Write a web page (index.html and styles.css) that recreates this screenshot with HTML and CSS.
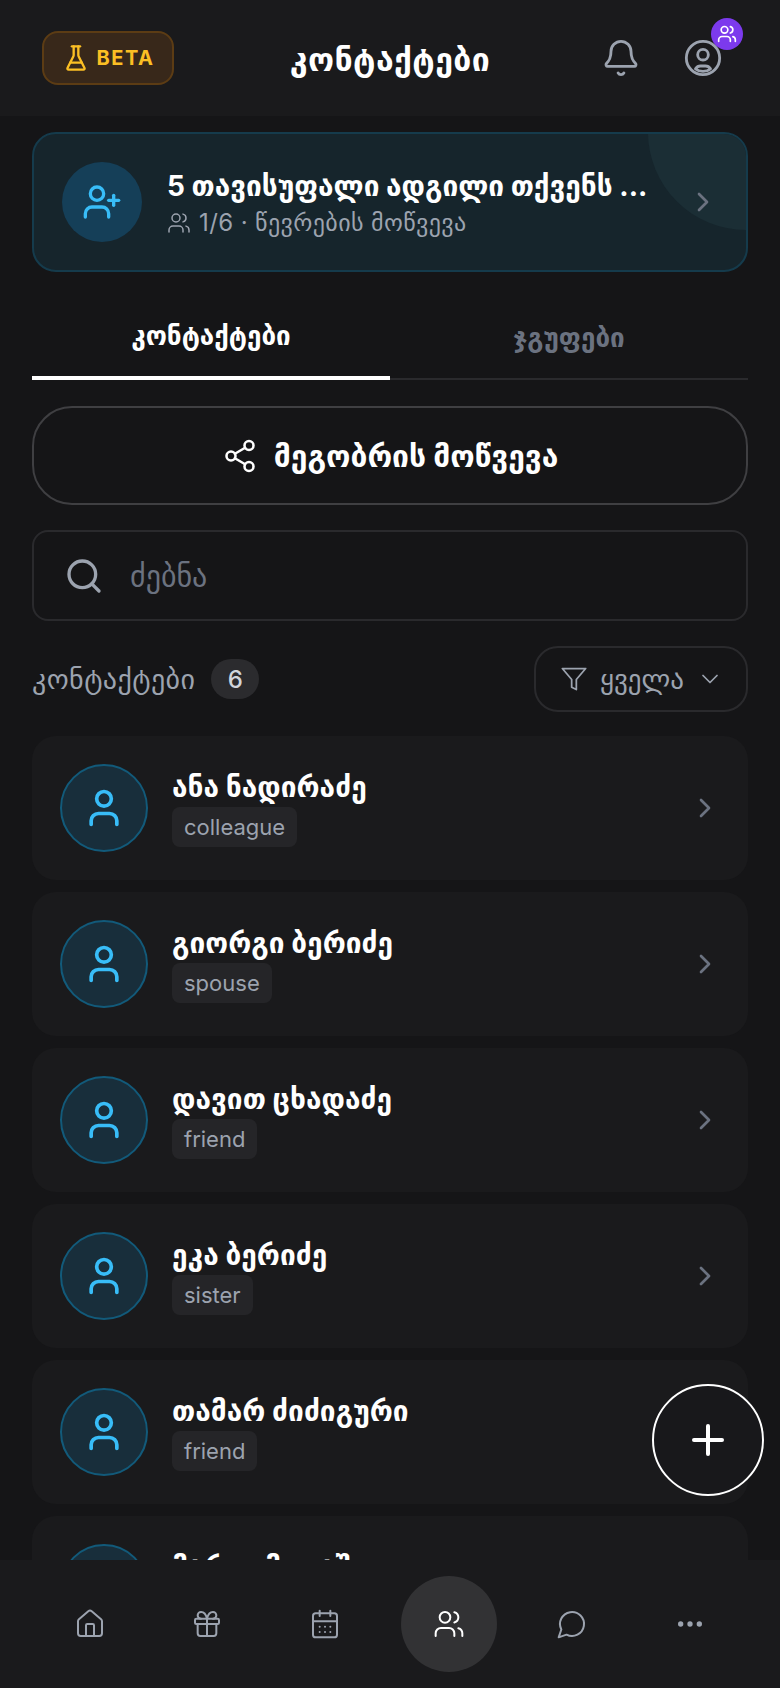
FILE: index.html
```html
<!DOCTYPE html>
<html lang="ka">
<head>
<meta charset="utf-8">
<title>კონტაქტები</title>
<link rel="stylesheet" href="styles.css">
</head>
<body>
<svg class="defs" width="0" height="0" aria-hidden="true">
  <symbol id="i-users" viewBox="0 0 24 24"><path d="M16 21v-2a4 4 0 0 0-4-4H6a4 4 0 0 0-4 4v2"/><circle cx="9" cy="7" r="4"/><path d="M22 21v-2a4 4 0 0 0-3-3.87"/><path d="M16 3.13a4 4 0 0 1 0 7.75"/></symbol>
  <symbol id="i-user" viewBox="0 0 24 24"><path d="M19 21v-2a4 4 0 0 0-4-4H9a4 4 0 0 0-4 4v2"/><circle cx="12" cy="7" r="4"/></symbol>
  <symbol id="i-chev" viewBox="0 0 24 24"><path d="m9 18 6-6-6-6"/></symbol>
</svg>
<div class="app">
  <header class="top">
    <div class="beta">
      <svg class="ic flask" viewBox="0 0 24 24"><path d="M10 2v7.527a2 2 0 0 1-.211.896L4.72 20.55a1 1 0 0 0 .9 1.45h12.76a1 1 0 0 0 .9-1.45l-5.069-10.127A2 2 0 0 1 14 9.527V2"/><path d="M8.5 2h7"/><path d="M7 16h10"/></svg>
      <span>BETA</span>
    </div>
    <h1 class="title">კონტაქტები</h1>
    <div class="top-icons">
      <svg class="ic bell" viewBox="0 0 24 24"><path d="M10.268 21a2 2 0 0 0 3.464 0"/><path d="M3.262 15.326A1 1 0 0 0 4 17h16a1 1 0 0 0 .74-1.673C19.41 13.956 18 12.499 18 8A6 6 0 0 0 6 8c0 4.499-1.411 5.956-2.738 7.326"/></svg>
      <div class="profile">
        <svg class="ic bell" viewBox="0 0 24 24"><circle cx="12" cy="12" r="10"/><circle cx="12" cy="10" r="3.2"/><path d="M7.5 18.5c.8-1.2 1.6-1.7 3-1.7h3c1.4 0 2.2.5 3 1.7-1.2 1-2.8 1.5-4.5 1.5s-3.300-.5-4.500-1.500z"/></svg>
        <span class="profile-badge"><svg class="ic"><use href="#i-users"/></svg></span>
      </div>
    </div>
  </header>

  <main class="content">
    <section class="banner">
      <span class="banner-glow"></span>
      <span class="banner-avatar">
        <svg class="ic" viewBox="0 0 24 24"><path d="M16 21v-2a4 4 0 0 0-4-4H6a4 4 0 0 0-4 4v2"/><circle cx="9" cy="7" r="4"/><path d="M19 8v6"/><path d="M22 11h-6"/></svg>
      </span>
      <div class="banner-text">
        <div class="banner-title">5 თავისუფალი ადგილი თქვენს ...</div>
        <div class="banner-sub"><svg class="ic"><use href="#i-users"/></svg><span>1/6 · წევრების მოწვევა</span></div>
      </div>
      <svg class="ic chev banner-chev"><use href="#i-chev"/></svg>
    </section>

    <nav class="tabs">
      <div class="tab active">კონტაქტები</div>
      <div class="tab">ჯგუფები</div>
    </nav>

    <button class="invite">
      <svg class="ic" viewBox="0 0 24 24"><circle cx="18" cy="5" r="3"/><circle cx="6" cy="12" r="3"/><circle cx="18" cy="19" r="3"/><path d="m8.59 13.51 6.83 3.98"/><path d="m15.41 6.51-6.82 3.98"/></svg>
      <span>მეგობრის მოწვევა</span>
    </button>

    <div class="search">
      <svg class="ic" viewBox="0 0 24 24"><circle cx="11" cy="11" r="8"/><path d="m21 21-4.300-4.300"/></svg>
      <span>ძებნა</span>
    </div>

    <div class="list-head">
      <div class="count-wrap"><span class="count-label">კონტაქტები</span><span class="count">6</span></div>
      <div class="filter">
        <svg class="ic funnel" viewBox="0 0 24 24"><path d="M22 3H2l8 9.460V19l4 2v-8.540z"/></svg>
        <span>ყველა</span>
        <svg class="ic down" viewBox="0 0 24 24"><path d="m6 9 6 6 6-6"/></svg>
      </div>
    </div>

    <ul class="list">
      <li class="card"><span class="avatar"><svg class="ic"><use href="#i-user"/></svg></span><div class="info"><div class="name">ანა ნადირაძე</div><span class="tag">colleague</span></div><svg class="ic chev"><use href="#i-chev"/></svg></li>
      <li class="card"><span class="avatar"><svg class="ic"><use href="#i-user"/></svg></span><div class="info"><div class="name">გიორგი ბერიძე</div><span class="tag">spouse</span></div><svg class="ic chev"><use href="#i-chev"/></svg></li>
      <li class="card"><span class="avatar"><svg class="ic"><use href="#i-user"/></svg></span><div class="info"><div class="name">დავით ცხადაძე</div><span class="tag">friend</span></div><svg class="ic chev"><use href="#i-chev"/></svg></li>
      <li class="card"><span class="avatar"><svg class="ic"><use href="#i-user"/></svg></span><div class="info"><div class="name">ეკა ბერიძე</div><span class="tag">sister</span></div><svg class="ic chev"><use href="#i-chev"/></svg></li>
      <li class="card"><span class="avatar"><svg class="ic"><use href="#i-user"/></svg></span><div class="info"><div class="name">თამარ ძიძიგური</div><span class="tag">friend</span></div><svg class="ic chev"><use href="#i-chev"/></svg></li>
      <li class="card"><span class="avatar"><svg class="ic"><use href="#i-user"/></svg></span><div class="info"><div class="name">მარი იმედაშვილი</div><span class="tag">friend</span></div><svg class="ic chev"><use href="#i-chev"/></svg></li>
    </ul>
  </main>

  <button class="fab"><svg class="ic" viewBox="0 0 24 24"><path d="M5 12h14"/><path d="M12 5v14"/></svg></button>

  <nav class="bottom">
    <span class="nav-item"><svg class="ic" viewBox="0 0 24 24"><path d="M15 21v-8a1 1 0 0 0-1-1h-4a1 1 0 0 0-1 1v8"/><path d="M3 10a2 2 0 0 1 .709-1.528l7-5.999a2 2 0 0 1 2.582 0l7 5.999A2 2 0 0 1 21 10v9a2 2 0 0 1-2 2H5a2 2 0 0 1-2-2z"/></svg></span>
    <span class="nav-item"><svg class="ic" viewBox="0 0 24 24"><rect x="3" y="8" width="18" height="4" rx="1"/><path d="M12 8v13"/><path d="M19 12v7a2 2 0 0 1-2 2H7a2 2 0 0 1-2-2v-7"/><path d="M7.500 8a2.500 2.500 0 0 1 0-5A4.800 8 0 0 1 12 8a4.800 8 0 0 1 4.500-5 2.500 2.500 0 0 1 0 5"/></svg></span>
    <span class="nav-item"><svg class="ic" viewBox="0 0 24 24"><path d="M8 2v4"/><path d="M16 2v4"/><rect x="3" y="4" width="18" height="18" rx="2"/><path d="M3 10h18"/><path d="M8 14h.01M12 14h.01M16 14h.01M8 18h.01M12 18h.01M16 18h.01"/></svg></span>
    <span class="nav-item active"><svg class="ic"><use href="#i-users"/></svg></span>
    <span class="nav-item"><svg class="ic" viewBox="0 0 24 24"><path d="M7.900 20A9 9 0 1 0 4 16.100L2 22Z"/></svg></span>
    <span class="nav-item"><svg class="ic dots" viewBox="0 0 24 24"><circle cx="12" cy="12" r="1"/><circle cx="19" cy="12" r="1"/><circle cx="5" cy="12" r="1"/></svg></span>
  </nav>
</div>
</body>
</html>
```
FILE: styles.css
```css
* { box-sizing: border-box; }
html, body { margin: 0; padding: 0; background: #151517; }
body { font-family: Inter, "DejaVu Sans", sans-serif; color: #fff; }
.defs { position: absolute; }
.ic { display: block; fill: none; stroke: currentColor; stroke-width: 1.5; stroke-linecap: round; stroke-linejoin: round; flex: none; }
.app { position: relative; width: 780px; height: 1688px; overflow: hidden; background: #151517; }

.top { height: 116px; background: #1a1a1c; display: grid; grid-template-columns: 1fr auto 1fr; align-items: center; padding: 0 42px; }
.beta { width: 132px; height: 54px; display: flex; align-items: center; justify-content: center; gap: 7px; background: #38281a; border: 2px solid #5c3c14; border-radius: 16px; color: #fbbf24; font-size: 20px; font-weight: 700; letter-spacing: 1.5px; }
.flask { width: 28px; height: 28px; stroke-width: 2; }
.title { margin: 4px 0 0; font-size: 32px; font-weight: 700; line-height: 40px; letter-spacing: 0.4px; }
.top-icons { display: flex; justify-content: flex-end; align-items: center; gap: 42px; padding-right: 15px; color: #9ca3af; }
.bell { width: 40px; height: 40px; stroke-width: 1.7; }
.profile { position: relative; }
.profile-badge { position: absolute; top: -20px; right: -20px; width: 32px; height: 32px; border-radius: 50%; background: #7c3aed; color: #fff; display: flex; align-items: center; justify-content: center; }
.profile-badge .ic { width: 20px; height: 20px; stroke-width: 2; }

.content { padding: 16px 32px 0; }
.banner { position: relative; height: 140px; display: flex; align-items: center; padding: 0 27px 0 28px; gap: 25px; overflow: hidden; background: #16252c; border: 2px solid #153b4c; border-radius: 24px; }
.banner-glow { position: absolute; right: -98px; top: -100px; width: 196px; height: 196px; border-radius: 50%; background: #1b2e35; }
.banner-avatar { position: relative; width: 80px; height: 80px; border-radius: 50%; background: #153f58; color: #38bdf8; display: flex; align-items: center; justify-content: center; }
.banner-avatar .ic { width: 40px; height: 40px; stroke-width: 2; }
.banner-text { position: relative; flex: 1; min-width: 0; padding-top: 1px; }
.banner-title { font-size: 28px; font-weight: 700; line-height: 38px; white-space: nowrap; }
.banner-sub { display: flex; align-items: center; gap: 8px; margin-top: 2px; color: #9ca3af; font-size: 24px; line-height: 32px; letter-spacing: 0.4px; }
.banner-sub .ic { width: 24px; height: 24px; }
.chev { width: 32px; height: 32px; color: #6b7280; stroke-width: 2; }
.banner-chev { position: relative; }

.tabs { display: flex; height: 108px; border-bottom: 2px solid #2a2a2d; }
.tab { flex: 1; display: flex; align-items: center; justify-content: center; padding-top: 22px; margin-bottom: -2px; font-size: 26px; font-weight: 700; color: #6b7280; }
.tab.active { color: #fff; border-bottom: 4px solid #fff; }

.invite { width: 100%; height: 99px; margin-top: 26px; display: flex; align-items: center; justify-content: center; gap: 16px; background: transparent; border: 2px solid #3f3f42; border-radius: 40px; color: #fff; font: 700 30px Inter, "DejaVu Sans", sans-serif; }
.invite .ic { width: 36px; height: 36px; stroke-width: 1.700; }

.search { height: 91px; margin-top: 25px; display: flex; align-items: center; gap: 26px; padding: 0 30px; border: 2px solid #2a2a2d; border-radius: 16px; color: #6b7280; font-size: 30px; }
.search .ic { width: 40px; height: 40px; color: #9ca3af; stroke-width: 2; }

.list-head { display: flex; justify-content: space-between; align-items: center; margin-top: 25px; height: 66px; }
.count-wrap { display: flex; align-items: center; gap: 16px; }
.count-label { color: #9ca3af; font-size: 28px; letter-spacing: 0.4px; }
.count { width: 48px; height: 40px; border-radius: 20px; background: #2b2b2e; color: #d1d5db; font-size: 24px; font-weight: 500; display: flex; align-items: center; justify-content: center; }
.filter { width: 214px; height: 66px; display: flex; align-items: center; gap: 12px; padding: 0 24px; border: 2px solid #2a2a2d; border-radius: 24px; color: #9ca3af; font-size: 27px; }
.funnel { width: 28px; height: 28px; }
.down { width: 28px; height: 28px; margin-left: auto; }

.list { list-style: none; margin: 24px 0 0; padding: 0; display: flex; flex-direction: column; gap: 12px; }
.card { height: 144px; display: flex; align-items: center; padding: 0 27px 0 28px; gap: 24px; background: #1a1a1c; border-radius: 24px; }
.avatar { width: 88px; height: 88px; border-radius: 50%; background: #182e3b; border: 2px solid #125a7a; color: #38bdf8; display: flex; align-items: center; justify-content: center; }
.avatar .ic { width: 44px; height: 44px; stroke-width: 2; }
.info { flex: 1; min-width: 0; display: flex; flex-direction: column; align-items: flex-start; gap: 2px; }
.name { font-size: 28px; font-weight: 700; line-height: 36px; letter-spacing: 0.05px; }
.tag { padding: 0 12px; height: 40px; line-height: 41px; border-radius: 8px; background: #252528; color: #9ca3af; font-size: 22px; }

.fab { position: absolute; left: 652px; top: 1384px; width: 112px; height: 112px; border-radius: 50%; background: #18181b; border: 2px solid #fff; color: #fff; display: flex; align-items: center; justify-content: center; padding: 0; }
.fab .ic { width: 48px; height: 48px; stroke-width: 2; }

.bottom { position: absolute; left: 0; right: 0; bottom: 0; height: 128px; background: #1a1a1c; display: flex; justify-content: space-around; padding: 0 31px; align-items: center; color: #9ca3af; }
.nav-item { width: 84px; height: 96px; display: flex; align-items: center; justify-content: center; }
.nav-item .ic { width: 32px; height: 32px; }
.nav-item.active { width: 96px; border-radius: 50%; background: #323234; color: #fff; }
.dots { stroke-width: 2; }
```
